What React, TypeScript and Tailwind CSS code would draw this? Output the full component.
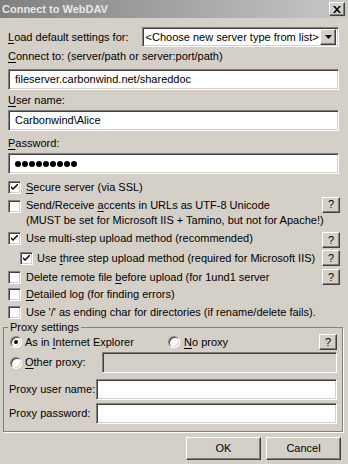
import type { ReactNode } from 'react'

const sunken =
  'border border-t-[#808080] border-l-[#808080] border-r-white border-b-white shadow-[inset_1px_1px_0_#404040,inset_-1px_-1px_0_#d4d0c8]'
const raised =
  'border border-t-white border-l-white border-r-[#404040] border-b-[#404040] shadow-[inset_-1px_-1px_0_#808080] bg-[#d4d0c8]'

function U({ children }: { children: ReactNode }) {
  return <span className="underline underline-offset-[2px]">{children}</span>
}

function TextBox({ value, className = '', disabled = false }: { value?: ReactNode; className?: string; disabled?: boolean }) {
  return (
    <div className={`${sunken} ${disabled ? 'bg-[#d4d0c8]' : 'bg-white'} flex items-center pl-[6px] ${className}`}>
      {value}
    </div>
  )
}

function Check({ checked }: { checked?: boolean }) {
  return (
    <div className={`${sunken} bg-white w-[13px] h-[13px] shrink-0 flex items-center justify-center`}>
      {checked && (
        <svg width="7" height="7" viewBox="0 0 7 7">
          <path d="M0 2 L0 4 L2 6 L7 1 L7 -1 L2 4 Z" fill="#000" />
        </svg>
      )}
    </div>
  )
}

function Radio({ checked }: { checked?: boolean }) {
  return (
    <div className="w-[12px] h-[12px] shrink-0 rounded-full border border-t-[#808080] border-l-[#808080] border-r-white border-b-white shadow-[inset_1px_1px_0_#404040,inset_-1px_-1px_0_#d4d0c8] bg-white flex items-center justify-center">
      {checked && <div className="w-[4px] h-[4px] rounded-full bg-black" />}
    </div>
  )
}

function Help() {
  return <div className={`${raised} w-[18px] h-[16px] shrink-0 flex items-center justify-center leading-none`}>?</div>
}

export default function App() {
  return (
    <div className="w-[348px] h-[464px] bg-[#d4d0c8] overflow-hidden text-[11px] leading-[13px] text-black font-['Liberation_Sans',Arial,sans-serif]">
      {/* title bar */}
      <div className="h-[18px] bg-gradient-to-r from-[#808080] to-[#c8c8c8] flex items-center justify-between pl-[2px] pr-[3px]">
        <span className="font-bold text-[#e8e8e8]">Connect to WebDAV</span>
        <div className={`${raised} w-[16px] h-[14px] flex items-center justify-center`}>
          <svg width="8" height="7" viewBox="0 0 8 7">
            <path d="M0 0 L2 0 L4 2.3 L6 0 L8 0 L5 3.5 L8 7 L6 7 L4 4.7 L2 7 L0 7 L3 3.5 Z" fill="#000" />
          </svg>
        </div>
      </div>

      <div className="px-[8px] pr-[9px]">
        <div className="mt-[9px] h-[20px] flex items-center">
          <span className="w-[128px]">
            <U>L</U>oad default settings for:
          </span>
          <div className={`${sunken} bg-white ml-[8px] w-[201px] h-[20px] flex items-center justify-between pl-[3px] pr-[2px]`}>
            <span>&lt;Choose new server type from list&gt;</span>
            <div className={`${raised} w-[16px] h-[16px] flex items-center justify-center`}>
              <svg width="7" height="4" viewBox="0 0 7 4">
                <path d="M0 0 L7 0 L3.5 4 Z" fill="#000" />
              </svg>
            </div>
          </div>
        </div>

        <div className="mt-[3px] h-[13px]">
          <U>C</U>onnect to: (server/path or server:port/path)
        </div>
        <TextBox className="mt-[6px] h-[21px]" value="fileserver.carbonwind.net/shareddoc" />

        <div className="mt-[4px] h-[13px]">
          <U>U</U>ser name:
        </div>
        <TextBox className="mt-[3px] h-[21px]" value="Carbonwind\Alice" />

        <div className="mt-[6px] h-[13px]">
          <U>P</U>assword:
        </div>
        <TextBox
          className="mt-[3px] h-[21px]"
          value={
            <div className="flex gap-[1px]">
              {Array.from({ length: 9 }).map((_, i) => (
                <div key={i} className="w-[6px] h-[6px] rounded-full bg-black" />
              ))}
            </div>
          }
        />
      </div>

      {/* options */}
      <div className="pl-[8px] pr-[8px] mt-[4px] whitespace-nowrap">
        <div className="h-[18px] flex items-center gap-[5px]">
          <Check checked />
          <span>
            <U>S</U>ecure server (via SSL)
          </span>
        </div>
        <div className="h-[32px] flex flex-col">
          <div className="h-[17px] flex items-center gap-[5px]">
            <div className="mt-[4px]">
              <Check />
            </div>
            <span className="flex-1 mt-[2px]">
              Send/Receive <U>a</U>ccents in URLs as UTF-8 Unicode
            </span>
            <Help />
          </div>
          <div className="pl-[18px] leading-[15px]">(MUST be set for Microsoft IIS + Tamino, but not for Apache!)</div>
        </div>
        <div className="h-[20px] flex items-center gap-[5px]">
          <Check checked />
          <span className="flex-1">Use multi-step upload method (recommended)</span>
          <div className="mt-[4px]">
            <Help />
          </div>
        </div>
        <div className="h-[20px] flex items-center gap-[4px] pl-[12px]">
          <Check checked />
          <span className="flex-1">
            Use <U>t</U>hree step upload method (required for Microsoft IIS)
          </span>
          <Help />
        </div>
        <div className="h-[18px] flex items-center gap-[5px]">
          <Check />
          <span className="flex-1">
            Delete remote file <U>b</U>efore upload (for 1und1 server
          </span>
          <Help />
        </div>
        <div className="h-[17px] flex items-center gap-[5px]">
          <Check />
          <span>
            <U>D</U>etailed log (for finding errors)
          </span>
        </div>
        <div className="h-[18px] flex items-center gap-[5px]">
          <Check />
          <span>Use '/' as ending char for directories (if rename/delete fails).</span>
        </div>
      </div>

      {/* proxy group */}
      <fieldset className="ml-[3px] w-[340px] border border-[#808080] shadow-[1px_1px_0_white] p-0 pb-[7px] pr-[5px]">
        <legend className="ml-[4px] px-[2px] leading-[13px]">Proxy settings</legend>
        <div className="h-[16px] flex items-center pl-[6px]">
          <Radio checked />
          <span className="ml-[3px] w-[143px]">
            As in <U>I</U>nternet Explorer
          </span>
          <Radio />
          <span className="ml-[4px] flex-1">
            <U>N</U>o proxy
          </span>
          <Help />
        </div>
        <div className="mt-[2px] h-[21px] flex items-center pl-[6px]">
          <Radio />
          <span className="ml-[3px] w-[77px]">
            <U>O</U>ther proxy:
          </span>
          <TextBox disabled className="flex-1 h-[21px]" />
        </div>
        <div className="mt-[6px] h-[21px] flex items-center pl-[5px]">
          <span className="w-[87px]">Proxy user name:</span>
          <TextBox className="flex-1 h-[21px]" />
        </div>
        <div className="mt-[3px] h-[21px] flex items-center pl-[5px]">
          <span className="w-[87px]">Proxy password:</span>
          <TextBox className="flex-1 h-[21px]" />
        </div>
      </fieldset>

      <div className="mt-[5px] flex justify-end gap-[5px] pr-[7px]">
        <div className={`${raised} w-[75px] h-[23px] flex items-center justify-center`}>OK</div>
        <div className={`${raised} w-[75px] h-[23px] flex items-center justify-center`}>Cancel</div>
      </div>
    </div>
  )
}
